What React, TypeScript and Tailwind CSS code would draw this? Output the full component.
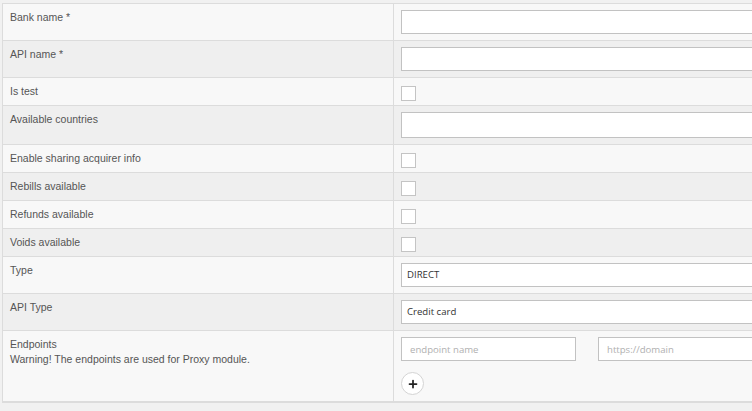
import React from 'react';
import { Plus } from 'lucide-react';

type Row = {
  label: string;
  note?: string;
  kind: 'input' | 'check' | 'select' | 'multi' | 'endpoints';
  value?: string;
};

const rows: Row[] = [
  { label: 'Bank name *', kind: 'input' },
  { label: 'API name *', kind: 'input' },
  { label: 'Is test', kind: 'check' },
  { label: 'Available countries', kind: 'multi' },
  { label: 'Enable sharing acquirer info', kind: 'check' },
  { label: 'Rebills available', kind: 'check' },
  { label: 'Refunds available', kind: 'check' },
  { label: 'Voids available', kind: 'check' },
  { label: 'Type', kind: 'select', value: 'DIRECT' },
  { label: 'API Type', kind: 'select', value: 'Credit card' },
  {
    label: 'Endpoints',
    note: 'Warning! The endpoints are used for Proxy module.',
    kind: 'endpoints',
  },
];

const heightFor = (kind: Row['kind']): string => {
  switch (kind) {
    case 'check':
      return 'h-[28px]';
    case 'multi':
      return 'h-[39px]';
    case 'endpoints':
      return 'h-[70px]';
    default:
      return 'h-[37px]';
  }
};

const Field: React.FC<{ row: Row }> = ({ row }) => {
  if (row.kind === 'check') {
    return <div className="mt-[8px] w-[15px] h-[15px] border border-[#c4c4c4] bg-white" />;
  }
  if (row.kind === 'endpoints') {
    return (
      <div className="pt-[6px]">
        <div className="flex gap-[22px]">
          <input
            placeholder="endpoint name"
            className="w-[175px] h-[24px] border border-[#c2c2c2] bg-white px-[8px] text-[9.6px] text-[#333] placeholder:text-[#b0b0b0] outline-none"
            style={{ fontFamily: '"Open Sans", sans-serif' }}
          />
          <input
            placeholder="https://domain"
            className="w-[200px] h-[24px] border border-[#c2c2c2] bg-white px-[8px] text-[9.6px] text-[#333] placeholder:text-[#b0b0b0] outline-none"
            style={{ fontFamily: '"Open Sans", sans-serif' }}
          />
        </div>
        <button className="mt-[11px] w-[23px] h-[23px] rounded-full border border-[#d4d4d4] bg-white flex items-center justify-center">
          <Plus size={12} strokeWidth={3.5} color="#222" />
        </button>
      </div>
    );
  }
  const h = row.kind === 'multi' ? 'h-[26px]' : 'h-[24px]';
  return (
    <div className="pt-[6px]">
      <div
        className={`${h} w-[500px] border border-[#c2c2c2] bg-white px-[5px] flex items-center text-[9.6px] text-[#333]`}
        style={{ fontFamily: '"Open Sans", sans-serif' }}
      >
        {row.value}
      </div>
    </div>
  );
};

const App: React.FC = () => {
  return (
    <div
      className="w-[752px] h-[411px] overflow-hidden bg-[#f1f1f1] pt-[3px] pl-[2px]"
      style={{ fontFamily: '"Liberation Sans", Arial, sans-serif' }}
    >
      <div className="w-[1000px] border-t border-l border-b-2 border-[#dcdcdc]">
        {rows.map((row, i) => (
          <div
            key={row.label}
            className={`flex ${heightFor(row.kind)} ${i % 2 === 0 ? 'bg-[#f8f8f8]' : 'bg-[#efefef]'} ${
              i < rows.length - 1 ? 'border-b border-[#dcdcdc]' : ''
            }`}
          >
            <div className="w-[391px] shrink-0 border-r border-[#dcdcdc] pl-[7px] pt-[6px] text-[10.5px] leading-[15px] text-[#555]">
              <div>{row.label}</div>
              {row.note && <div>{row.note}</div>}
            </div>
            <div className="flex-1 pl-[7px]">
              <Field row={row} />
            </div>
          </div>
        ))}
      </div>
    </div>
  );
};

export default App;
